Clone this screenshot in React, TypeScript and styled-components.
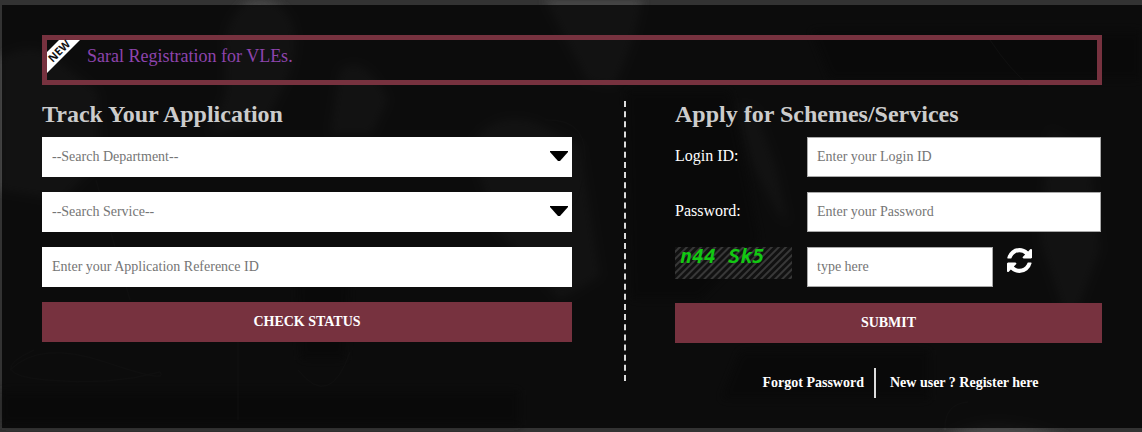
import React from "react";
import styled, { createGlobalStyle } from "styled-components";

const GlobalStyle = createGlobalStyle`
  * { box-sizing: border-box; }
  body {
    margin: 0;
    background: #333;
    font-family: "Liberation Serif", "Times New Roman", serif;
    color: #fff;
  }
`;

const Page = styled.main`
  position: relative;
  min-height: 100vh;
  padding: 5px 0 4px 2px;
  overflow: hidden;
  background: #333;
`;

const Scene = styled.svg`
  position: absolute;
  inset: 0;
  width: 100%;
  height: 100%;
`;

const Panel = styled.section`
  position: relative;
  padding: 30px 40px;
  background: rgba(0, 0, 0, 0.75);
`;

const Notice = styled.div`
  display: flex;
  align-items: flex-start;
  gap: 7px;
  height: 50px;
  border: 5px solid #77323f;
`;

const Ribbon = styled.svg`
  display: block;
  overflow: visible;
`;

const NoticeLink = styled.a`
  padding-top: 4px;
  font-size: 18px;
  line-height: 24px;
  color: #8e44ad;
  text-decoration: none;
`;

const Columns = styled.div`
  display: flex;
  align-items: flex-start;
  padding-top: 16px;
`;

const TrackForm = styled.form`
  flex: 0 0 50%;
  display: flex;
  flex-direction: column;
  gap: 15px;
`;

const Divider = styled.div`
  flex: none;
  height: 280px;
  margin: 0 49px 0 52px;
  border-left: 2px dashed #ddd;
`;

const ApplyForm = styled.form`
  flex: 1;
  min-width: 0;
  display: flex;
  flex-direction: column;
  gap: 15px;
`;

const Title = styled.h2`
  margin: 0 0 -15px;
  height: 36px;
  font-size: 24px;
  line-height: 26px;
  color: #ccc;
`;

const Field = styled.input`
  flex: 1;
  min-width: 0;
  height: 40px;
  min-height: 40px;
  padding: 0 9px;
  border: 1px solid ${(p: { $outlined?: boolean }) => (p.$outlined ? "#a9a9a9" : "#fff")};
  border-radius: 0;
  background: #fff;
  color: #333;
  font: 14px "Liberation Serif", "Times New Roman", serif;
  &::placeholder { color: #757575; opacity: 1; }
`;

const SelectBox = styled.div`
  position: relative;
  display: flex;
`;

const Select = styled.select`
  appearance: none;
  width: 100%;
  height: 40px;
  padding: 0 30px 2px 10px;
  border: 0;
  border-radius: 0;
  background: #fff;
  color: #757575;
  font: 14px "Liberation Serif", "Times New Roman", serif;
`;

const Caret = styled.svg`
  position: absolute;
  top: 14px;
  right: 4px;
  pointer-events: none;
`;

const Row = styled.div`
  display: flex;
  padding-right: 1px;
`;

const Label = styled.label`
  flex: none;
  width: 132px;
  font-size: 16px;
  line-height: 38px;
`;

const CaptchaCell = styled.div`
  flex: none;
  width: 132px;
`;

const Captcha = styled.div`
  width: 117px;
  height: 32px;
  padding-left: 5px;
  background: repeating-linear-gradient(135deg, #111 0 2px, #383838 3px 4px, #111 5px);
  color: #12c812;
  font: italic bold 20px/18px "DejaVu Sans Mono", monospace;
  white-space: pre;
`;

const Refresh = styled.button`
  flex: none;
  width: 108px;
  height: 26px;
  padding: 0 0 0 14px;
  border: 0;
  background: none;
  color: #fff;
  svg { display: block; }
`;

const Submit = styled.button`
  height: 40px;
  border: 0;
  background: #77323f;
  color: #fff;
  font: bold 14px "Liberation Serif", "Times New Roman", serif;
`;

const Actions = styled.div`
  display: flex;
  flex-direction: column;
  gap: 25px;
  padding-top: 1px;
`;

const Links = styled.nav`
  display: flex;
  justify-content: center;
  padding-left: 20px;
`;

const AccountLink = styled.a`
  padding: 0 10px 0 14px;
  color: #fff;
  font-size: 14px;
  font-weight: bold;
  line-height: 30px;
  text-decoration: none;
  & + & { border-left: 2px solid #ddd; }
`;

function Backdrop() {
  return (
    <Scene viewBox="0 0 1142 432" preserveAspectRatio="xMidYMid slice" aria-hidden="true">
      <defs>
        <filter id="soft">
          <feGaussianBlur stdDeviation="5" />
        </filter>
      </defs>
      <rect width="1142" height="432" fill="#333" />
      <g fill="#4a4a4a" filter="url(#soft)">
        <path d="M225 45C228 10 250-8 275 4C298 14 302 50 284 86L268 118L210 134L226 92Z" />
        <path d="M0 58Q35 38 60 62L98 92L100 160L62 200L0 190Z" />
        <path d="M545 0H642Q636 40 614 86L588 82Z" />
        <path d="M340 70Q365 52 388 100L372 134H330Z" />
        <path d="M735 105L755 108L776 166L788 222L778 214L750 160Z" />
        <path d="M470 148Q490 110 535 122L580 145L600 276L560 300L498 230Z" />
        <path d="M1050 130L1088 150L1100 250L1070 330L1040 240Z" />
        <path d="M940 440Q990 405 1070 440Z" />
      </g>
      <g fill="#262626" filter="url(#soft)">
        <path d="M296 280H350L346 360H300ZM626 90H730L760 240L700 300H630Z" />
        <path d="M0 390H520V425H0ZM740 350H930V400H720ZM810 30H1142V80H830Z" />
      </g>
      <g fill="none" stroke="#404040" strokeWidth="1">
        <path d="M10 370Q40 340 105 362T160 372Q110 386 46 380T34 350" />
        <path d="M96 180L130 300M238 340V420M298 370Q330 410 350 352" />
        <path d="M545 120Q592 118 584 170T566 198M945 430Q944 404 968 402" />
        <path d="M990 40Q1010 70 1030 86" />
      </g>
    </Scene>
  );
}

function NewRibbon() {
  return (
    <Ribbon width="33" height="33" viewBox="0 0 33 33" role="img" aria-label="New">
      <path d="M12 0H33L0 33V12Z" fill="#fff" />
      <text
        x="12"
        y="15"
        transform="rotate(-45 12 11)"
        textAnchor="middle"
        fontFamily="Open Sans, sans-serif"
        fontSize="11"
        fontWeight="bold"
        fill="#111"
      >
        NEW
      </text>
    </Ribbon>
  );
}

function RefreshIcon() {
  return (
    <svg width="25" height="25" viewBox="0 0 1536 1536" fill="currentColor" aria-hidden="true">
      <path d="M1511 928q0 5-1 7-64 268-268 434.500t-478 166.500q-146 0-282.500-55t-243.500-157l-129 129q-19 19-45 19t-45-19-19-45v-448q0-26 19-45t45-19h448q26 0 45 19t19 45-19 45l-137 137q71 66 161 102t187 36q134 0 250-65t186-179q11-17 53-117 8-23 30-23h192q13 0 22.500 9.500t9.500 22.500zM1536 128v448q0 26-19 45t-45 19h-448q-26 0-45-19t-19-45 19-45l138-138q-148-137-349-137-134 0-250 65t-186 179q-11 17-53 117-8 23-30 23h-199q-13 0-22.500-9.500t-9.500-22.500v-7q65-268 270-434.500t480-166.500q146 0 284 55.500t245 156.500l130-129q19-19 45-19t45 19 19 45z" />
    </svg>
  );
}

function SearchSelect({ label }: { label: string }) {
  return (
    <SelectBox>
      <Select aria-label={label.replace(/-/g, "")}>
        <option>{label}</option>
      </Select>
      <Caret width="18" height="11" viewBox="0 0 18 11">
        <path d="M0 0H18V1L10 10H8L0 1Z" fill="#000" />
      </Caret>
    </SelectBox>
  );
}

export default function App() {
  return (
    <Page>
      <GlobalStyle />
      <Backdrop />
      <Panel>
        <Notice>
          <NewRibbon />
          <NoticeLink href="#vle">Saral Registration for VLEs.</NoticeLink>
        </Notice>
        <Columns>
          <TrackForm>
            <Title>Track Your Application</Title>
            <SearchSelect label="--Search Department--" />
            <SearchSelect label="--Search Service--" />
            <Field aria-label="Application Reference ID" placeholder="Enter your Application Reference ID" />
            <Submit type="button">CHECK STATUS</Submit>
          </TrackForm>
          <Divider />
          <ApplyForm>
            <Title>Apply for Schemes/Services</Title>
            <Row>
              <Label htmlFor="login">Login ID:</Label>
              <Field $outlined id="login" placeholder="Enter your Login ID" />
            </Row>
            <Row>
              <Label htmlFor="password">Password:</Label>
              <Field $outlined id="password" type="password" placeholder="Enter your Password" />
            </Row>
            <Row>
              <CaptchaCell>
                <Captcha>n44 Sk5</Captcha>
              </CaptchaCell>
              <Field $outlined aria-label="Captcha" placeholder="type here" />
              <Refresh type="button" aria-label="Refresh captcha">
                <RefreshIcon />
              </Refresh>
            </Row>
            <Actions>
              <Submit type="button">SUBMIT</Submit>
              <Links>
                <AccountLink href="#forgot">Forgot Password</AccountLink>
                <AccountLink href="#register">New user ? Register here</AccountLink>
              </Links>
            </Actions>
          </ApplyForm>
        </Columns>
      </Panel>
    </Page>
  );
}
